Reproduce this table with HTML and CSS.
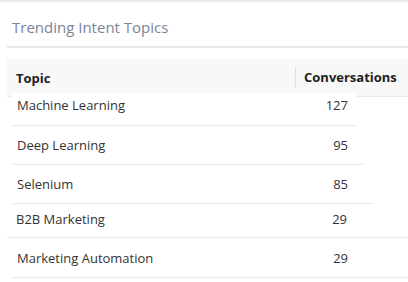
FILE: index.html
```html
<!DOCTYPE html>
<html lang="en">
<head>
    <meta charset="UTF-8">
    <meta name="viewport" content="width=device-width, initial-scale=1.0">
    <title>Trending Intent Topics</title>
    <link rel="stylesheet" href="styles.css">
</head>
<body>
    <div class="panel">
        <h2 class="panelTitle">Trending Intent Topics</h2>
        <div class="topicTable">
            <div class="headRow">
                <div class="topicCell">Topic</div>
                <div class="countHead">Conversations</div>
            </div>
            <div class="row row1">
                <div class="topicCell">Machine Learning</div>
                <div class="countCell">127</div>
            </div>
            <div class="row row2">
                <div class="topicCell">Deep Learning</div>
                <div class="countCell">95</div>
            </div>
            <div class="row row3">
                <div class="topicCell">Selenium</div>
                <div class="countCell">85</div>
            </div>
            <div class="row row4">
                <div class="topicCell">B2B Marketing</div>
                <div class="countCell">29</div>
            </div>
            <div class="row row5">
                <div class="topicCell">Marketing Automation</div>
                <div class="countCell">29</div>
            </div>
        </div>
    </div>
</body>
</html>
```

FILE: styles.css
```css
body{
    margin: 0;
    background: #fff;
    font-family: "Open Sans", "Noto Sans", sans-serif;
    color: #333;
}
.panel{
    border-top: 2px solid #e9eaee;
    height: 280px;
    overflow: hidden;
}
.panelTitle{
    margin: 0 0 0 7px;
    padding: 15px 0 0 5px;
    height: 29px;
    font-size: 15px;
    font-weight: normal;
    line-height: 20px;
    color: #7b8499;
    border-bottom: 2px solid #e6e8ec;
}
.topicTable{
    margin-top: 11px;
    margin-left: 7px;
    font-size: 13px;
}
.headRow{
    display: flex;
    align-items: center;
    height: 37px;
    background: #f8f8f8;
    border-bottom: 1px solid #ececec;
    font-weight: bold;
    color: #222;
}
.headRow .topicCell{
    width: 279px;
    padding-left: 9px;
}
.countHead{
    border-left: 1px solid #e2e2e2;
    padding-left: 8px;
    line-height: 21px;
}
.row{
    display: flex;
    align-items: center;
    margin-left: 5px;
    background: #fff;
    border-bottom: 1px solid #ebebeb;
    position: relative;
}
.row .topicCell{
    width: 291px;
    padding-left: 5px;
    box-sizing: border-box;
}
.countCell{
    width: 45px;
    text-align: right;
}
.row1{
    width: 344px;
    height: 24px;
    margin-top: -4px;
    padding-bottom: 8px;
}
.row2{
    width: 352px;
    height: 38px;
}
.row3{
    width: 361px;
    height: 38px;
}
.row4{
    margin-left: 0;
    padding-left: 4px;
    padding-bottom: 3px;
    box-sizing: border-box;
    height: 34px;
}
.row5{
    height: 39px;
}
```
